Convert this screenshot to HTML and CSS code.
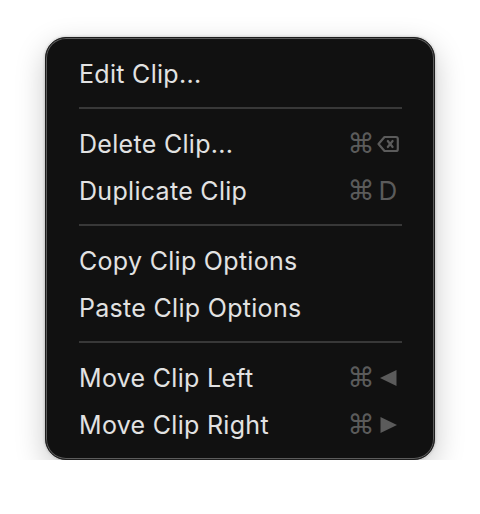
FILE: index.html
```html
<!DOCTYPE html>
<html>
<head>
<meta charset="utf-8">
<link rel="stylesheet" href="styles.css">
</head>
<body>
<div class="menu">
  <div class="item"><span class="label">Edit Clip...</span></div>
  <div class="sep"></div>
  <div class="item"><span class="label">Delete Clip...</span>
    <span class="keys"><span class="key cmd">⌘</span><span class="key"><svg class="icon" width="22" height="18" viewBox="0 0 22 18"><path d="M7.5 2 H19 a1.8 1.8 0 0 1 1.8 1.8 V14.2 a1.8 1.8 0 0 1 -1.8 1.8 H7.5 L1.5 9 Z" fill="none" stroke="#5b5b5b" stroke-width="2.2" stroke-linejoin="round"/><path d="M10.8 6 L15.6 12 M15.6 6 L10.8 12" stroke="#5b5b5b" stroke-width="2.2" stroke-linecap="round"/></svg></span></span>
  </div>
  <div class="item"><span class="label">Duplicate Clip</span>
    <span class="keys"><span class="key cmd">⌘</span><span class="key letter">D</span></span>
  </div>
  <div class="sep"></div>
  <div class="item"><span class="label">Copy Clip Options</span></div>
  <div class="item"><span class="label">Paste Clip Options</span></div>
  <div class="sep"></div>
  <div class="item"><span class="label">Move Clip Left</span>
    <span class="keys"><span class="key cmd">⌘</span><span class="key"><svg class="icon" width="19" height="18" viewBox="0 0 19 18"><path d="M1 9 L17.5 1 V17 Z" fill="#5b5b5b"/></svg></span></span>
  </div>
  <div class="item"><span class="label">Move Clip Right</span>
    <span class="keys"><span class="key cmd">⌘</span><span class="key"><svg class="icon" width="19" height="18" viewBox="0 0 19 18"><path d="M18 9 L1.5 1 V17 Z" fill="#5b5b5b"/></svg></span></span>
  </div>
</div>
</body>
</html>
```
FILE: styles.css
```css
html, body {
  margin: 0;
  padding: 0;
  background: #ffffff;
}
body {
  padding: 37px 0 0 45px;
  font-family: Inter, "Noto Sans", sans-serif;
}
.menu {
  box-sizing: border-box;
  width: 390px;
  background: #111111;
  border: 1px solid #1e1e1e;
  border-radius: 21px;
  box-shadow: inset 0 0 0 1px #5c5c5c, 0 10px 30px rgba(0,0,0,0.22), 0 0 3px rgba(0,0,0,0.25);
  padding: 12px 0 11px;
}
.item {
  height: 47px;
  display: flex;
  align-items: center;
  justify-content: space-between;
  padding: 0 36px 0 33px;
}
.label {
  color: #e2e2e2;
  font-size: 25px;
  font-weight: 400;
  letter-spacing: 0.3px;
}
.keys {
  display: flex;
  align-items: center;
  gap: 7px;
}
.key {
  width: 20px;
  display: flex;
  justify-content: center;
  align-items: center;
  color: #5b5b5b;
}
.icon {
  flex-shrink: 0;
  display: block;
}
.cmd {
  font-family: "DejaVu Sans", sans-serif;
  font-size: 27px;
  line-height: 1;
}
.letter {
  font-size: 26px;
  font-weight: 400;
}
.sep {
  height: 2px;
  background: #383838;
  margin: 10px 32px 11px 33px;
}
```
